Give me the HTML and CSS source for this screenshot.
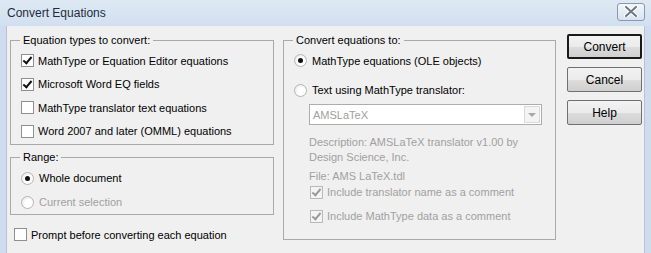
FILE: index.html
```html
<!DOCTYPE html>
<html lang="en">
  <head>
    <meta charset="UTF-8" />
    <title>Convert Equations</title>
    <link rel="stylesheet" href="styles.css">
  </head>
  <body>
    <div class="window">
      <div class="titlebar">
        <span class="title">Convert Equations</span>
        <span class="closebtn">
          <svg width="14" height="11" viewBox="0 0 14 11">
            <path d="M2 1 L12 10 M12 1 L2 10" stroke="#ffffff" stroke-width="4" stroke-linecap="round"/>
            <path d="M2 1 L12 10 M12 1 L2 10" stroke="#6d7786" stroke-width="2" stroke-linecap="round"/>
          </svg>
        </span>
      </div>
      <div class="client">
        <div class="leftcol">
          <fieldset class="group types">
            <legend>Equation types to convert:</legend>
            <div class="row"><span class="check on"></span>MathType or Equation Editor equations</div>
            <div class="row"><span class="check on"></span>Microsoft Word EQ fields</div>
            <div class="row"><span class="check"></span>MathType translator text equations</div>
            <div class="row"><span class="check"></span>Word 2007 and later (OMML) equations</div>
          </fieldset>
          <fieldset class="group range">
            <legend>Range:</legend>
            <div class="row"><span class="radio on"></span>Whole document</div>
            <div class="row disabled"><span class="radio"></span>Current selection</div>
          </fieldset>
          <div class="row prompt"><span class="check"></span>Prompt before converting each equation</div>
        </div>
        <fieldset class="group target">
          <legend>Convert equations to:</legend>
          <div class="row"><span class="radio on"></span>MathType equations (OLE objects)</div>
          <div class="row second"><span class="radio"></span>Text using MathType translator:</div>
          <div class="sub">
            <div class="combo">
              <span>AMSLaTeX</span>
              <span class="arrow"></span>
            </div>
            <div class="desc">Description: AMSLaTeX translator v1.00 by<br>Design Science, Inc.</div>
            <div class="file">File: AMS LaTeX.tdl</div>
            <div class="opts">
              <div class="row"><span class="check on dim"></span>Include translator name as a comment</div>
              <div class="row"><span class="check on dim"></span>Include MathType data as a comment</div>
            </div>
          </div>
        </fieldset>
        <div class="buttons">
          <button class="default">Convert</button>
          <button>Cancel</button>
          <button>Help</button>
        </div>
      </div>
    </div>
  </body>
</html>
```
FILE: styles.css
```css
body {
  margin: 0;
  font-family: "Liberation Sans", Arial, sans-serif;
  font-size: 11px;
  color: #000;
}

.window {
  width: 651px;
  height: 253px;
  background: #cddcee;
  display: flex;
  flex-direction: column;
  overflow: hidden;
}

.titlebar {
  height: 26px;
  flex: none;
  display: flex;
  align-items: center;
  justify-content: space-between;
  padding: 0 6px 0 7px;
  background: linear-gradient(#dfe9f5, #d1dff0);
}

.title {
  font-size: 12px;
  color: #1e2b3c;
  margin-top: -1px;
}

.closebtn {
  width: 26px;
  height: 16px;
  border: 1px solid #8a98ac;
  border-radius: 3px;
  background: linear-gradient(#f3f6fa, #d9e3ef);
  display: flex;
  align-items: center;
  justify-content: center;
  margin-top: -3px;
}

.client {
  flex: 1;
  margin: 0 6px;
  background: #f0f0f0;
  border-left: 1px solid #b5c3d4;
  border-right: 1px solid #b5c3d4;
  display: flex;
  align-items: flex-start;
  padding: 7px 0 0 3px;
}

.group {
  margin: 0;
  border: 1px solid #a9a9a9;
  padding: 2px 0 0 10px;
  min-width: 0;
}

.group legend {
  padding: 0 3px;
  margin-left: -1px;
  line-height: 14px;
}

.leftcol {
  width: 264px;
  display: flex;
  flex-direction: column;
}

.types {
  padding-bottom: 1px;
}

.row {
  display: flex;
  align-items: center;
  height: 23.5px;
  white-space: nowrap;
}

.check {
  width: 11px;
  height: 11px;
  border: 1px solid #8e8f8f;
  background: #fff;
  margin-right: 4px;
  position: relative;
  flex: none;
}

.check.on::after {
  content: "";
  position: absolute;
  left: 3px;
  top: 0px;
  width: 3px;
  height: 7px;
  border: solid #111;
  border-width: 0 2px 2px 0;
  transform: rotate(40deg);
}

.check.dim {
  border-color: #b9b9b9;
  background: #f4f4f4;
}

.check.dim::after {
  border-color: #9a9a9a;
}

.radio {
  width: 11px;
  height: 11px;
  border-radius: 50%;
  border: 1px solid #b5b5b5;
  background: radial-gradient(circle at 60% 60%, #ffffff 40%, #dcdcdc 100%);
  margin-right: 5px;
  position: relative;
  flex: none;
}

.radio.on::after {
  content: "";
  position: absolute;
  left: 3px;
  top: 3px;
  width: 5px;
  height: 5px;
  border-radius: 50%;
  background: #111;
}

.disabled {
  color: #a0a0a0;
}

.range {
  margin-top: 5px;
  padding-bottom: 0;
}

.range .row {
  height: 24px;
}

.prompt {
  margin: 8px 0 0 4px;
}

.target {
  width: 273px;
  box-sizing: border-box;
  margin-left: 9px;
  padding-bottom: 11px;
}

.target .second {
  margin-top: 6px;
}

.sub {
  padding-left: 15px;
  color: #a0a0a0;
}

.combo {
  width: 233px;
  height: 21px;
  border: 1px solid #adadad;
  background: #fff;
  display: flex;
  align-items: center;
  justify-content: space-between;
  padding-left: 3px;
  margin-top: 2px;
  box-sizing: border-box;
}

.arrow {
  width: 14px;
  height: 15px;
  margin-right: 1px;
  border: 1px solid #dadada;
  background: #f4f4f4;
  position: relative;
}

.arrow::after {
  content: "";
  position: absolute;
  left: 3px;
  top: 6px;
  border: 4px solid transparent;
  border-top-color: #a8a8a8;
  border-bottom: 0;
}

.desc {
  margin-top: 10px;
  line-height: 15px;
}

.file {
  margin-top: 4px;
  line-height: 15px;
}

.opts {
  margin-top: -4px;
  padding-left: 1px;
}

.opts .row {
  height: 24px;
}

.buttons {
  margin: 1px 0 0 11px;
  display: flex;
  flex-direction: column;
  gap: 8px;
}

.buttons button {
  width: 75px;
  height: 25px;
  padding: 0;
  font: inherit;
  font-size: 12px;
  border: 1px solid #707070;
  border-radius: 2px;
  background: linear-gradient(#f2f2f2, #ebebeb 50%, #dddddd 51%, #cfcfcf);
}

.buttons .default {
  border: 2px solid #1a1a1a;
}
```
